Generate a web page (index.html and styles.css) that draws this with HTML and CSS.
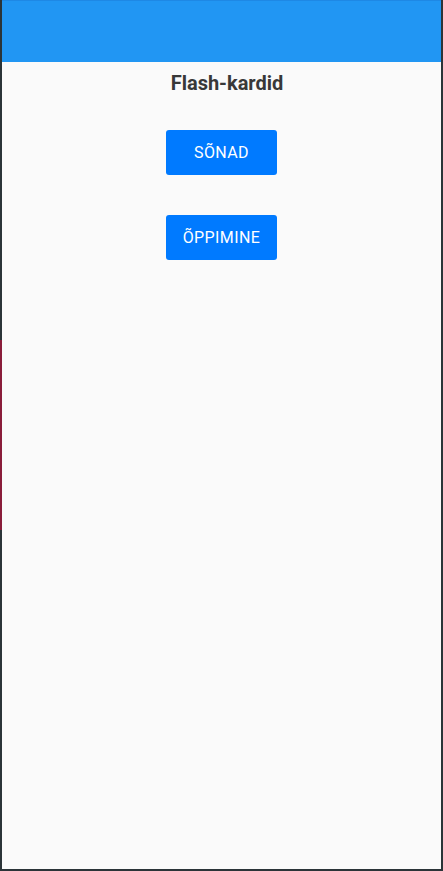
FILE: index.html
```html
<!DOCTYPE html>
<html>
<head>
<meta charset="utf-8">
<link rel="stylesheet" href="styles.css">
</head>
<body>
<div class="frame">
  <div class="side side-left"><div class="red"></div></div>
  <div class="window">
    <header class="appbar"></header>
    <main class="content">
      <h1 class="title">Flash-kardid</h1>
      <div class="buttons">
        <button class="btn">SÕNAD</button>
        <button class="btn">ÕPPIMINE</button>
      </div>
    </main>
  </div>
  <div class="side side-right"></div>
</div>
</body>
</html>
```

FILE: styles.css
```css
html, body {
  margin: 0;
  padding: 0;
  height: 100%;
  background: #2b3438;
}
.frame {
  display: flex;
  height: 871px;
}
.side {
  background: #2b3438;
  position: relative;
}
.side-left {
  width: 2px;
}
.red {
  position: absolute;
  top: 340px;
  left: 0;
  width: 2px;
  height: 190px;
  background: #8a1d3a;
}
.side-right {
  width: 2px;
}
.window {
  flex: 1;
  display: flex;
  flex-direction: column;
  background: #fafafa;
  margin-bottom: 2px;
}
.appbar {
  height: 62px;
  background: #2196f3;
  border-top: 1px solid #1e88e5;
  box-sizing: border-box;
}
.content {
  display: flex;
  flex-direction: column;
  align-items: center;
  font-family: Roboto, "Liberation Sans", sans-serif;
}
.title {
  margin: 9px 0 0;
  padding-left: 11px;
  font-size: 20px;
  line-height: 24px;
  font-weight: 700;
  color: #383838;
}
.buttons {
  margin-top: 35px;
  display: flex;
  flex-direction: column;
  gap: 40px;
}
.btn {
  width: 111px;
  height: 45px;
  border: none;
  border-radius: 3px;
  background: #007aff;
  color: #fff;
  font-family: Roboto, "Liberation Sans", sans-serif;
  font-size: 16px;
  font-weight: 400;
  letter-spacing: 0.4px;
  padding: 0;
}
```
